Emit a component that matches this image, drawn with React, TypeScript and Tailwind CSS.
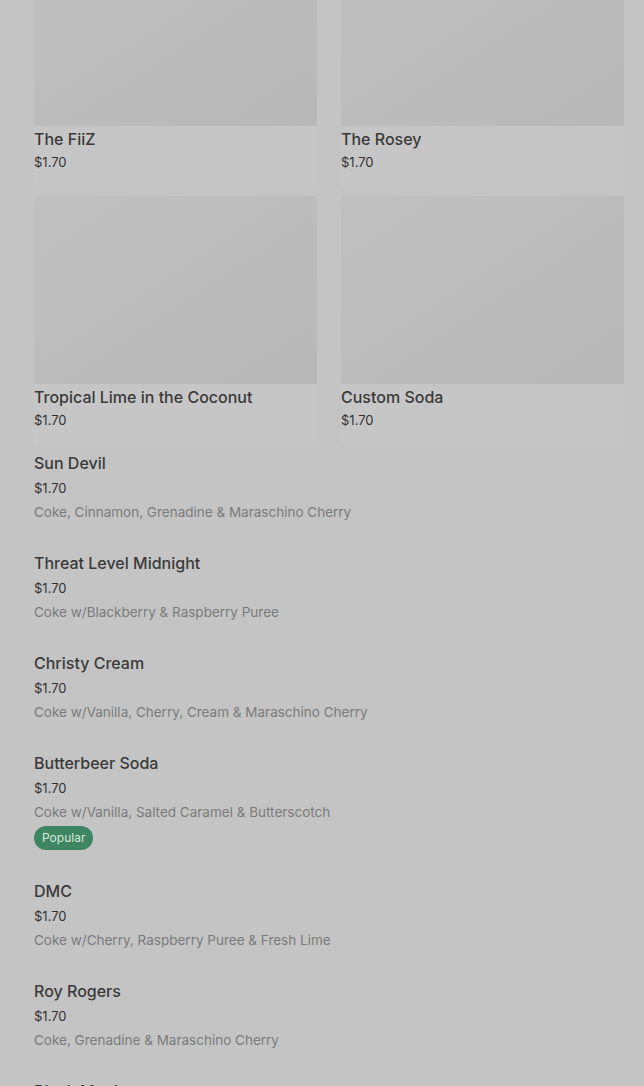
import React from 'react';

type Card = { name: string; price: string };
type Item = { name: string; price: string; desc: string; popular?: boolean };

const cards: Card[] = [
  { name: 'The FiiZ', price: '$1.70' },
  { name: 'The Rosey', price: '$1.70' },
  { name: 'Tropical Lime in the Coconut', price: '$1.70' },
  { name: 'Custom Soda', price: '$1.70' },
];

const items: Item[] = [
  { name: 'Sun Devil', price: '$1.70', desc: 'Coke, Cinnamon, Grenadine & Maraschino Cherry' },
  { name: 'Threat Level Midnight', price: '$1.70', desc: 'Coke w/Blackberry & Raspberry Puree' },
  { name: 'Christy Cream', price: '$1.70', desc: 'Coke w/Vanilla, Cherry, Cream & Maraschino Cherry' },
  { name: 'Butterbeer Soda', price: '$1.70', desc: 'Coke w/Vanilla, Salted Caramel & Butterscotch', popular: true },
  { name: 'DMC', price: '$1.70', desc: 'Coke w/Cherry, Raspberry Puree & Fresh Lime' },
  { name: 'Roy Rogers', price: '$1.70', desc: 'Coke, Grenadine & Maraschino Cherry' },
  { name: 'Black Magic', price: '$1.70', desc: 'Coke w/Blackberry & Fresh Lime' },
];

const App: React.FC = () => {
  return (
    <div
      className="h-[1086px] overflow-hidden bg-[#c4c4c4]"
      style={{ fontFamily: 'Inter, "Noto Sans", sans-serif' }}
    >
      <div className="mt-[-62px] pl-[34px] pr-[20px]">
        <div className="grid grid-cols-2 gap-x-6 gap-y-2">
          {cards.map((c) => (
            <div key={c.name} className="flex flex-col bg-[#c6c6c6] pb-4">
              <div className="h-[188px] bg-gradient-to-br from-[#c0c0c0] to-[#b8b8b8]" />
              <div className="mt-[3px] text-[16px] leading-5 font-medium text-[#3a3a3a]">{c.name}</div>
              <div className="mt-[3px] text-[13px] leading-5 text-[#333]">{c.price}</div>
            </div>
          ))}
        </div>

        <div className="mt-[5px] flex flex-col">
          {items.map((it) => (
            <div key={it.name} className="flex flex-col pb-[27px]">
              <div className="text-[16px] leading-6 font-medium text-[#3a3a3a]">{it.name}</div>
              <div className="mt-px text-[13px] leading-6 text-[#333]">{it.price}</div>
              <div className="text-[13.5px] leading-6 text-[#7b7b7b]">{it.desc}</div>
              {it.popular && (
                <div className="mt-[2px] mb-[2px] flex">
                  <span className="rounded-full bg-[#3e8661] px-2 text-[12px] leading-6 text-[#d6e6dc]">
                    Popular
                  </span>
                </div>
              )}
            </div>
          ))}
        </div>
      </div>
    </div>
  );
};

export default App;
